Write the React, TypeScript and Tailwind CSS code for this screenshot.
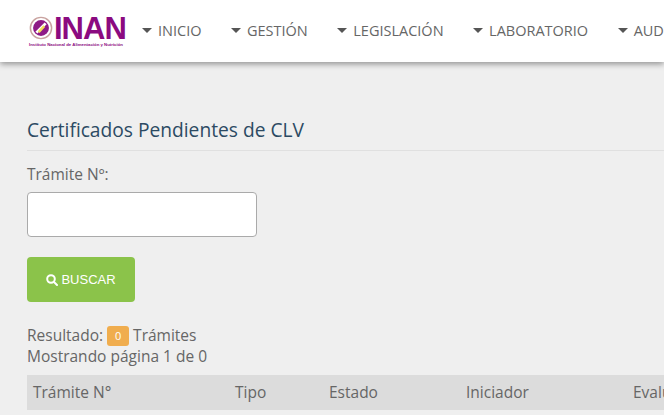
const navItems = ["INICIO", "GESTIÓN", "LEGISLACIÓN", "LABORATORIO", "AUDITORÍA"];

const columns = [
    { label: "Trámite N°", width: "w-[202px]" },
    { label: "Tipo", width: "w-[94px]" },
    { label: "Estado", width: "w-[137px]" },
    { label: "Iniciador", width: "w-[167px]" },
    { label: "Evaluador", width: "w-[120px]" },
];

const Logo = () => (
    <div className="w-[97px] shrink-0">
        <div className="flex items-center h-[25px]">
            <svg width="24" height="24" viewBox="0 0 26 26" className="shrink-0">
                <circle cx="13" cy="13" r="11.5" fill="#fff" stroke="#c9a3a0" strokeWidth="1.6" />
                <circle cx="13" cy="13" r="8.6" fill="#8e1a86" />
                <path d="M8 18 L18 8" stroke="#fff" strokeWidth="3" />
                <path d="M10.5 17.5 L16.5 11" stroke="#f2df5a" strokeWidth="2.6" />
            </svg>
            <span className="block font-['Liberation_Sans',sans-serif] font-bold text-[31px] leading-[25px] h-[25px] text-[#8b0a80] tracking-[-1px] ml-[1px]">
                INAN
            </span>
        </div>
        <div className="font-['Liberation_Sans',sans-serif] font-bold text-[4.3px] leading-[5px] text-[#8b0a80] whitespace-nowrap mt-[1px]">
            Instituto Nacional de Alimentación y Nutrición
        </div>
    </div>
);

const App = () => {
    return (
        <div className="w-[664px] h-[415px] overflow-hidden bg-[#efefef] font-['Open_Sans',sans-serif]">
            <header className="h-[62px] bg-white shadow-[0_2px_6px_rgba(0,0,0,0.4)] flex items-center pl-[29px] overflow-hidden">
                <Logo />
                <nav className="flex items-center ml-[16px] gap-[29.5px] whitespace-nowrap -mt-[1px]">
                    {navItems.map((item) => (
                        <a key={item} className="flex items-center gap-[6px] text-[14.5px] text-[#666]">
                            <span className="w-0 h-0 border-x-[5px] border-x-transparent border-t-[5px] border-t-[#555]" />
                            {item}
                        </a>
                    ))}
                </nav>
            </header>

            <main className="pl-[27px] pt-[56px]">
                <h1 className="text-[19.2px] leading-[24px] text-[#2c4a63] pb-[8px] border-b border-[#e0e0e0]">
                    Certificados Pendientes de CLV
                </h1>
                <label className="block mt-[13px] text-[15.5px] leading-[20px] text-[#666]">Trámite Nº:</label>
                <input className="block mt-[8px] w-[230px] h-[45px] bg-white border border-[#aaa] rounded-[4px]" />
                <button className="mt-[20px] w-[108px] h-[45px] bg-[#8bc34a] rounded-[4px] flex items-center justify-center gap-[3px] text-white text-[13px] font-['Liberation_Sans',sans-serif]">
                    <svg width="12" height="12" viewBox="0 0 12 12" fill="none" stroke="#fff" strokeWidth="2">
                        <circle cx="5" cy="5" r="3.8" />
                        <path d="M8 8 L11 11" strokeLinecap="round" />
                    </svg>
                    BUSCAR
                </button>
                <div className="mt-[23px] text-[15.5px] leading-[21px] text-[#666]">
                    <div className="flex items-center gap-[4px] h-[21px]">
                        Resultado:
                        <span className="w-[22px] h-[20px] rounded-[3px] bg-[#f0ad4e] text-white text-[11px] flex items-center justify-center">0</span>
                        Trámites
                    </div>
                    <div>Mostrando página 1 de 0</div>
                </div>
                <div className="mt-[8px] h-[35px] bg-[#dcdcdc] flex items-center text-[15.5px] text-[#666] whitespace-nowrap">
                    {columns.map((col) => (
                        <div key={col.label} className={`${col.width} shrink-0 pl-[6px]`}>
                            {col.label}
                        </div>
                    ))}
                </div>
            </main>
        </div>
    );
};

export default App;
